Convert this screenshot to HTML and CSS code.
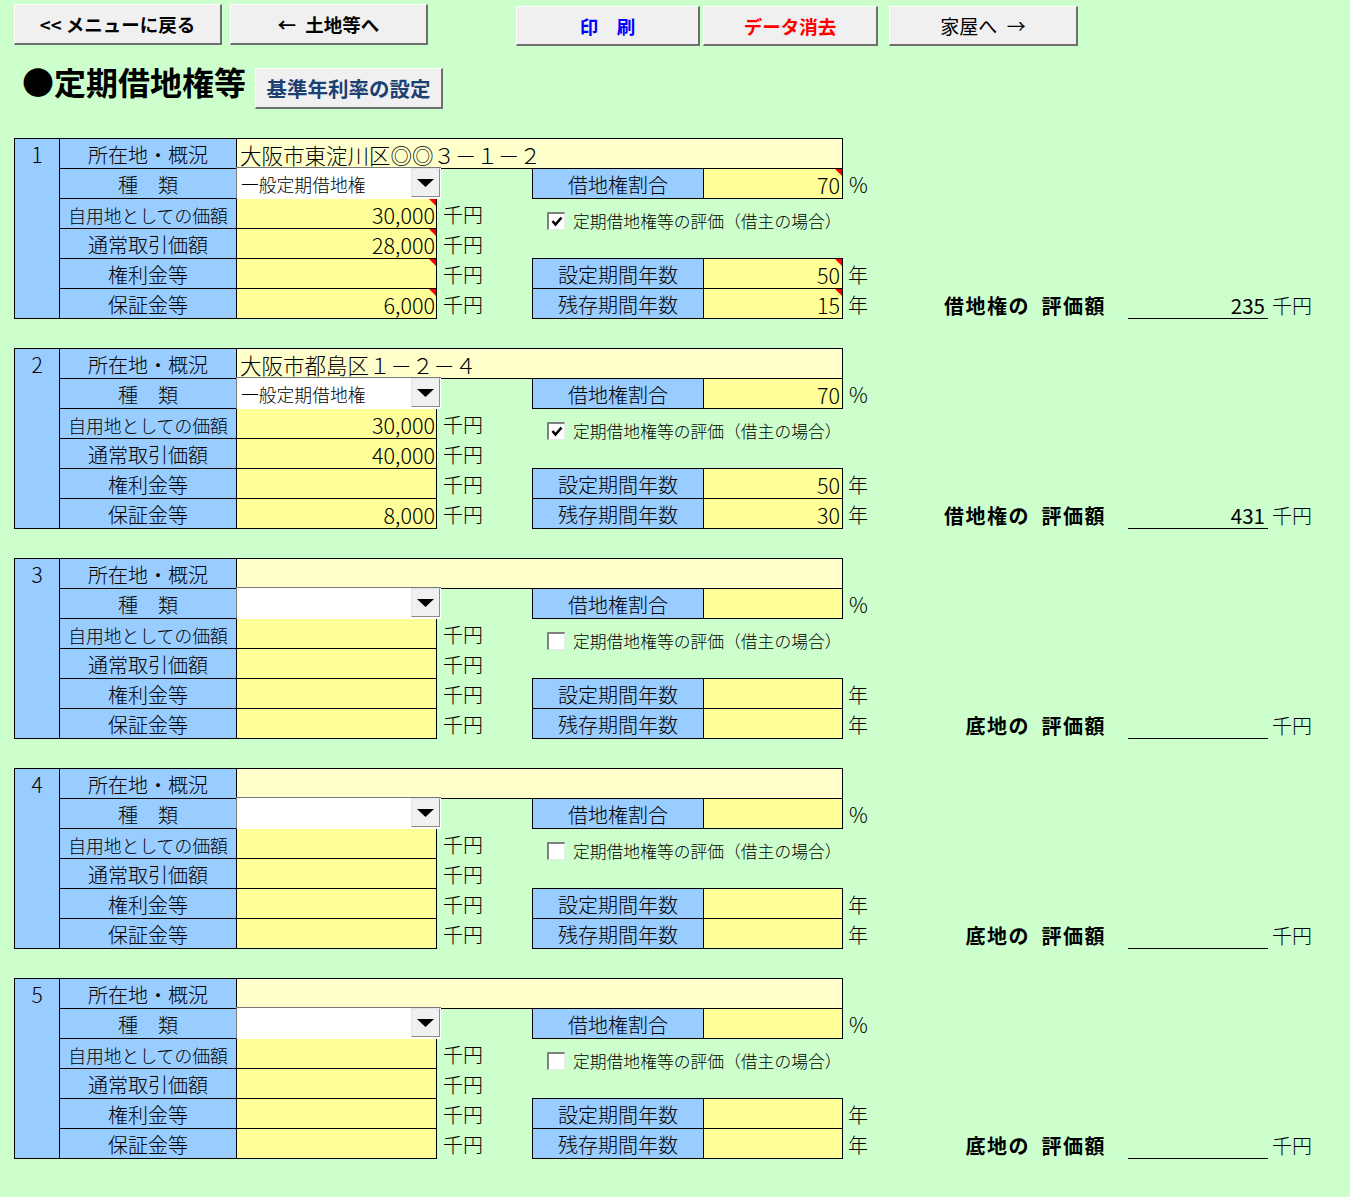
FILE: index.html
```html
<!DOCTYPE html>
<html lang="ja">
<head>
<meta charset="utf-8">
<title>定期借地権等</title>
<link rel="stylesheet" href="styles.css">
</head>
<body>
<div class="page">
  <div class="toolbar">
    <div class="btn b-menu">&lt;&lt; メニューに戻る</div>
    <div class="btn b-land">←&ensp;土地等へ</div>
    <div class="btn b-print">印　刷</div>
    <div class="btn b-clear">データ消去</div>
    <div class="btn b-house">家屋へ&ensp;→</div>
  </div>

  <div class="titlerow">
    <div class="title">●定期借地権等</div>
    <div class="btn b-rate">基準年利率の設定</div>
  </div>

  <div class="blocks">
    <!-- block 1 -->
    <section class="blk">
      <div class="num"><span class="numtxt">1</span></div>
      <div class="c lbl">所在地・概況</div>
      <div class="c addr">大阪市東淀川区◎◎３－１－２</div>
      <div class="c lbl">種　類</div>
      <div class="ddcell"><div class="dd"><span class="dd-text">一般定期借地権</span><span class="dd-btn"><svg width="17" height="8" viewBox="0 0 17 8"><path d="M0 0H17L8.5 8Z" fill="#000"/></svg></span></div></div>
      <div class="c top"></div>
      <div class="c rlbl">借地権割合</div>
      <div class="c rval note">70</div>
      <div class="c pct">%</div>
      <div class="c lbl small">自用地としての価額</div>
      <div class="c val note">30,000</div>
      <div class="c unit">千円</div>
      <div class="c cb"><span class="box"><svg width="12" height="11" viewBox="0 0 12 11"><polyline points="1.5,5 4.5,8.5 10.5,1.5" fill="none" stroke="#000" stroke-width="2.6"/></svg></span><span class="cbtext">定期借地権等の評価（借主の場合）</span></div>
      <div class="c lbl">通常取引価額</div>
      <div class="c val note">28,000</div>
      <div class="c unit">千円</div>
      <div class="c lbl">権利金等</div>
      <div class="c val note"></div>
      <div class="c unit">千円</div>
      <div class="c rlbl">設定期間年数</div>
      <div class="c rval note">50</div>
      <div class="c yr">年</div>
      <div class="c lbl last">保証金等</div>
      <div class="c val note last">6,000</div>
      <div class="c unit">千円</div>
      <div class="c rlbl last">残存期間年数</div>
      <div class="c rval note last">15</div>
      <div class="c yr">年</div>
      <div class="c elbl">借地権の&ensp;評価額</div>
      <div class="c ev">235</div>
      <div class="c eu">千円</div>
    </section>

    <!-- block 2 -->
    <section class="blk">
      <div class="num"><span class="numtxt">2</span></div>
      <div class="c lbl">所在地・概況</div>
      <div class="c addr">大阪市都島区１－２－４</div>
      <div class="c lbl">種　類</div>
      <div class="ddcell"><div class="dd"><span class="dd-text">一般定期借地権</span><span class="dd-btn"><svg width="17" height="8" viewBox="0 0 17 8"><path d="M0 0H17L8.5 8Z" fill="#000"/></svg></span></div></div>
      <div class="c top"></div>
      <div class="c rlbl">借地権割合</div>
      <div class="c rval">70</div>
      <div class="c pct">%</div>
      <div class="c lbl small">自用地としての価額</div>
      <div class="c val">30,000</div>
      <div class="c unit">千円</div>
      <div class="c cb"><span class="box"><svg width="12" height="11" viewBox="0 0 12 11"><polyline points="1.5,5 4.5,8.5 10.5,1.5" fill="none" stroke="#000" stroke-width="2.6"/></svg></span><span class="cbtext">定期借地権等の評価（借主の場合）</span></div>
      <div class="c lbl">通常取引価額</div>
      <div class="c val">40,000</div>
      <div class="c unit">千円</div>
      <div class="c lbl">権利金等</div>
      <div class="c val"></div>
      <div class="c unit">千円</div>
      <div class="c rlbl">設定期間年数</div>
      <div class="c rval">50</div>
      <div class="c yr">年</div>
      <div class="c lbl last">保証金等</div>
      <div class="c val last">8,000</div>
      <div class="c unit">千円</div>
      <div class="c rlbl last">残存期間年数</div>
      <div class="c rval last">30</div>
      <div class="c yr">年</div>
      <div class="c elbl">借地権の&ensp;評価額</div>
      <div class="c ev">431</div>
      <div class="c eu">千円</div>
    </section>

    <!-- block 3 -->
    <section class="blk">
      <div class="num"><span class="numtxt">3</span></div>
      <div class="c lbl">所在地・概況</div>
      <div class="c addr"></div>
      <div class="c lbl">種　類</div>
      <div class="ddcell"><div class="dd"><span class="dd-text"></span><span class="dd-btn"><svg width="17" height="8" viewBox="0 0 17 8"><path d="M0 0H17L8.5 8Z" fill="#000"/></svg></span></div></div>
      <div class="c top"></div>
      <div class="c rlbl">借地権割合</div>
      <div class="c rval"></div>
      <div class="c pct">%</div>
      <div class="c lbl small">自用地としての価額</div>
      <div class="c val"></div>
      <div class="c unit">千円</div>
      <div class="c cb"><span class="box"></span><span class="cbtext">定期借地権等の評価（借主の場合）</span></div>
      <div class="c lbl">通常取引価額</div>
      <div class="c val"></div>
      <div class="c unit">千円</div>
      <div class="c lbl">権利金等</div>
      <div class="c val"></div>
      <div class="c unit">千円</div>
      <div class="c rlbl">設定期間年数</div>
      <div class="c rval"></div>
      <div class="c yr">年</div>
      <div class="c lbl last">保証金等</div>
      <div class="c val last"></div>
      <div class="c unit">千円</div>
      <div class="c rlbl last">残存期間年数</div>
      <div class="c rval last"></div>
      <div class="c yr">年</div>
      <div class="c elbl">底地の&ensp;評価額</div>
      <div class="c ev"></div>
      <div class="c eu">千円</div>
    </section>

    <!-- block 4 -->
    <section class="blk">
      <div class="num"><span class="numtxt">4</span></div>
      <div class="c lbl">所在地・概況</div>
      <div class="c addr"></div>
      <div class="c lbl">種　類</div>
      <div class="ddcell"><div class="dd"><span class="dd-text"></span><span class="dd-btn"><svg width="17" height="8" viewBox="0 0 17 8"><path d="M0 0H17L8.5 8Z" fill="#000"/></svg></span></div></div>
      <div class="c top"></div>
      <div class="c rlbl">借地権割合</div>
      <div class="c rval"></div>
      <div class="c pct">%</div>
      <div class="c lbl small">自用地としての価額</div>
      <div class="c val"></div>
      <div class="c unit">千円</div>
      <div class="c cb"><span class="box"></span><span class="cbtext">定期借地権等の評価（借主の場合）</span></div>
      <div class="c lbl">通常取引価額</div>
      <div class="c val"></div>
      <div class="c unit">千円</div>
      <div class="c lbl">権利金等</div>
      <div class="c val"></div>
      <div class="c unit">千円</div>
      <div class="c rlbl">設定期間年数</div>
      <div class="c rval"></div>
      <div class="c yr">年</div>
      <div class="c lbl last">保証金等</div>
      <div class="c val last"></div>
      <div class="c unit">千円</div>
      <div class="c rlbl last">残存期間年数</div>
      <div class="c rval last"></div>
      <div class="c yr">年</div>
      <div class="c elbl">底地の&ensp;評価額</div>
      <div class="c ev"></div>
      <div class="c eu">千円</div>
    </section>

    <!-- block 5 -->
    <section class="blk">
      <div class="num"><span class="numtxt">5</span></div>
      <div class="c lbl">所在地・概況</div>
      <div class="c addr"></div>
      <div class="c lbl">種　類</div>
      <div class="ddcell"><div class="dd"><span class="dd-text"></span><span class="dd-btn"><svg width="17" height="8" viewBox="0 0 17 8"><path d="M0 0H17L8.5 8Z" fill="#000"/></svg></span></div></div>
      <div class="c top"></div>
      <div class="c rlbl">借地権割合</div>
      <div class="c rval"></div>
      <div class="c pct">%</div>
      <div class="c lbl small">自用地としての価額</div>
      <div class="c val"></div>
      <div class="c unit">千円</div>
      <div class="c cb"><span class="box"></span><span class="cbtext">定期借地権等の評価（借主の場合）</span></div>
      <div class="c lbl">通常取引価額</div>
      <div class="c val"></div>
      <div class="c unit">千円</div>
      <div class="c lbl">権利金等</div>
      <div class="c val"></div>
      <div class="c unit">千円</div>
      <div class="c rlbl">設定期間年数</div>
      <div class="c rval"></div>
      <div class="c yr">年</div>
      <div class="c lbl last">保証金等</div>
      <div class="c val last"></div>
      <div class="c unit">千円</div>
      <div class="c rlbl last">残存期間年数</div>
      <div class="c rval last"></div>
      <div class="c yr">年</div>
      <div class="c elbl">底地の&ensp;評価額</div>
      <div class="c ev"></div>
      <div class="c eu">千円</div>
    </section>
  </div>
</div>
</body>
</html>
```

FILE: styles.css
```css
* { box-sizing: border-box; }
html, body { margin: 0; padding: 0; }
body {
  background: #ccffcc;
  font-family: "Noto Sans CJK JP", "Noto Sans", sans-serif;
  font-weight: 300;
  color: #000;
  min-height: 1197px;
}
.page { padding: 4px 0 0 14px; }

/* toolbar */
.toolbar { display: flex; align-items: flex-start; height: 42px; }
.btn {
  display: flex;
  align-items: center;
  justify-content: center;
  background: #f0f0f0;
  border-style: solid;
  border-width: 1px 2px 2px 1px;
  border-color: #ffffff #6e6e6e #6e6e6e #ffffff;
  font-size: 18.5px;
  font-weight: 700;
  white-space: nowrap;
}
.b-menu { width: 208px; height: 41px; }
.b-land { width: 198px; height: 41px; margin-left: 8px; }
.b-print { width: 184px; height: 40px; margin: 2px 0 0 88px; color: #0000ff; }
.b-clear { width: 175px; height: 40px; margin: 2px 0 0 3px; color: #ff0000; }
.b-house { width: 189px; height: 40px; margin: 2px 0 0 11px; font-weight: 400; font-size: 19px; }

/* title */
.titlerow { display: flex; align-items: flex-start; margin-top: 22px; height: 41px; }
.title { font-size: 32px; font-weight: 700; line-height: 32px; margin: -3px 0 0 8px; white-space: nowrap; }
.b-rate { width: 188px; height: 41px; margin-left: 9px; color: #1d4073; font-size: 20.5px; }

/* blocks */
.blocks { display: flex; flex-direction: column; gap: 29px; margin-top: 29px; }
.blk {
  display: grid;
  grid-template-columns: 45px 177px 201px 95px 171px 140px 37px 230px 18px 140px 52px;
  grid-template-rows: 30px 30px 30px 30px 30px 31px;
  width: 1306px;
}
.c {
  display: flex;
  align-items: center;
  padding-top: 2px;
  min-width: 0;
  white-space: nowrap;
}
.num {
  grid-row: span 6;
  background: #99ccff;
  border: 1px solid #000;
  border-right: 0;
  padding-top: 1px;
  text-align: center;
}
.numtxt { display: block; font-size: 21px; line-height: 28px; }
.lbl {
  grid-column: 2;
  background: #99ccff;
  border-top: 1px solid #000;
  border-left: 1px solid #000;
  justify-content: center;
  font-size: 20px;
}
.lbl.small { font-size: 17.8px; }
.addr {
  grid-column: span 4;
  background: #ffffcc;
  border: 1px solid #000;
  border-bottom: 0;
  padding-left: 3px;
  font-size: 21.5px;
}
.top { border-top: 1px solid #000; }
.rlbl {
  background: #99ccff;
  border-top: 1px solid #000;
  border-left: 1px solid #000;
  justify-content: center;
  font-size: 20px;
}
.val, .rval {
  background: #ffff99;
  border-top: 1px solid #000;
  border-left: 1px solid #000;
  border-right: 1px solid #000;
  justify-content: flex-end;
  padding-right: 1px;
  font-size: 21.5px;
}
.rval { padding-right: 2px; }
.last { border-bottom: 1px solid #000; }
.note { position: relative; }
.note::after {
  content: "";
  position: absolute;
  top: 0;
  right: 0;
  width: 0;
  height: 0;
  border-style: solid;
  border-width: 0 7px 7px 0;
  border-color: transparent #ff0000 transparent transparent;
}
.unit { padding-left: 6px; font-size: 20px; }
.pct { padding-left: 6px; font-size: 21px; }
.yr { padding-left: 5px; font-size: 20px; }

/* dropdown */
.ddcell { grid-column: 3; }
.dd {
  position: relative;
  z-index: 1;
  display: flex;
  height: 32px;
  margin: -1px -4px 0 0;
  background: #ffffff;
  border-top: 1px solid #7a7a7a;
  border-left: 1px solid #7a7a7a;
  padding: 0 1px 2px 0;
}
.dd-text {
  flex: 1;
  display: flex;
  align-items: center;
  padding: 2px 0 0 4px;
  font-size: 17.8px;
  white-space: nowrap;
}
.dd-btn {
  width: 29px;
  display: flex;
  align-items: center;
  justify-content: center;
  background: #f0f0f0;
  border: 1px solid;
  border-color: #e4e4e4 #8c8c8c #8c8c8c #e4e4e4;
}

/* checkbox */
.cb {
  grid-column: span 2;
  grid-row: span 2;
  border-top: 1px solid #000;
  align-items: flex-start;
  padding: 13px 0 0 15px;
}
.box {
  width: 18px;
  height: 18px;
  flex: none;
  display: flex;
  align-items: center;
  justify-content: center;
  background: #ffffff;
  border-style: solid;
  border-width: 2px 1px 1px 2px;
  border-color: #808080 #e8e8e8 #e8e8e8 #808080;
}
.cbtext { margin-left: 8px; font-size: 16.8px; line-height: 18px; }

/* evaluation */
.elbl {
  grid-column: 8;
  justify-content: flex-end;
  padding: 3px 4px 0 0;
  font-size: 20px;
  font-weight: 700;
  letter-spacing: 1.5px;
}
.ev {
  grid-column: 10;
  border-bottom: 1px solid #000;
  justify-content: flex-end;
  padding: 3px 3px 0 0;
  font-size: 20.5px;
  font-weight: 400;
}
.eu { padding: 3px 0 0 4px; font-size: 20px; }
```
